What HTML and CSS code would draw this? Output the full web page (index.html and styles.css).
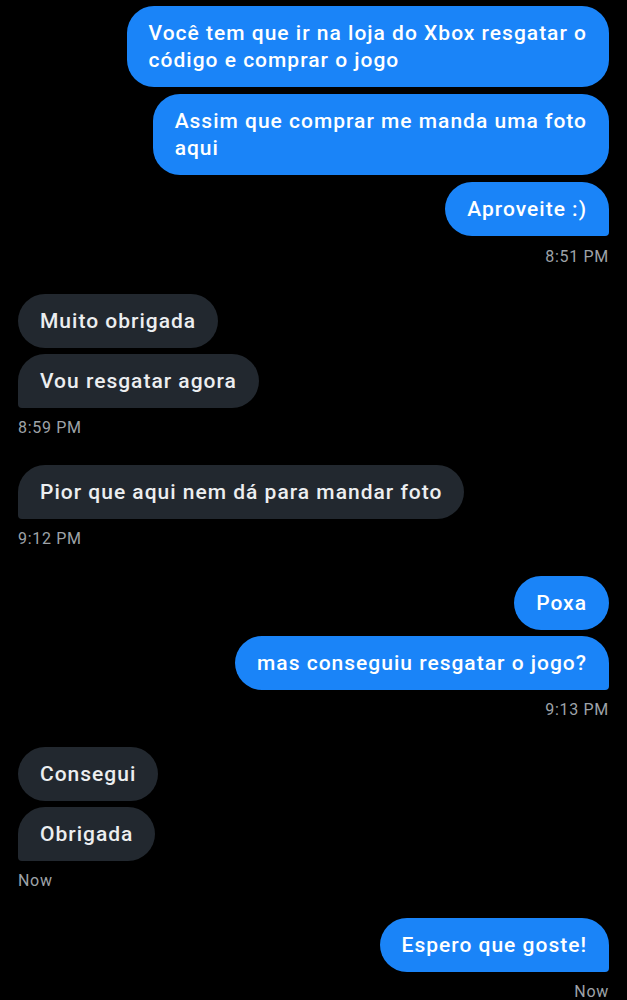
FILE: index.html
```html
<!DOCTYPE html>
<html lang="pt">
<head>
  <meta charset="UTF-8">
  <title>Conversa</title>
  <link rel="stylesheet" href="styles.css">
</head>
<body>

<div class="chat">

  <div class="group sent first">
    <div class="bubble">Você tem que ir na loja do Xbox resgatar o<br>código e comprar o jogo</div>
    <div class="bubble">Assim que comprar me manda uma foto<br>aqui</div>
    <div class="bubble">Aproveite :)</div>
    <div class="time">8:51 PM</div>
  </div>

  <div class="group received">
    <div class="bubble">Muito obrigada</div>
    <div class="bubble">Vou resgatar agora</div>
    <div class="time">8:59 PM</div>
  </div>

  <div class="group received">
    <div class="bubble">Pior que aqui nem dá para mandar foto</div>
    <div class="time">9:12 PM</div>
  </div>

  <div class="group sent">
    <div class="bubble">Poxa</div>
    <div class="bubble">mas conseguiu resgatar o jogo?</div>
    <div class="time">9:13 PM</div>
  </div>

  <div class="group received">
    <div class="bubble">Consegui</div>
    <div class="bubble">Obrigada</div>
    <div class="time">Now</div>
  </div>

  <div class="group sent">
    <div class="bubble">Espero que goste!</div>
    <div class="time">Now</div>
  </div>

</div>

</body>
</html>
```

FILE: styles.css
```css
body {
  margin: 0;
  background-color: #000;
  font-family: Roboto, "Noto Sans", sans-serif;
}
.chat {
  display: flex;
  flex-direction: column;
  gap: 27px;
  padding: 6px 18px 0 18px;
}
.group {
  display: flex;
  flex-direction: column;
  gap: 6px;
}
.first {
  gap: 7px;
}
.sent {
  align-items: flex-end;
}
.received {
  align-items: flex-start;
}
.bubble {
  padding: 13.5px 22px;
  font-size: 21px;
  font-weight: 500;
  letter-spacing: 1px;
  line-height: 27px;
  border-radius: 27px;
  white-space: nowrap;
}
.sent .bubble {
  background-color: #1a84f8;
  color: #fff;
}
.received .bubble {
  background-color: #22282f;
  color: #eceef0;
}
.sent .bubble:nth-last-child(2) {
  border-bottom-right-radius: 4px;
}
.received .bubble:nth-last-child(2) {
  border-bottom-left-radius: 4px;
}
.time {
  margin-top: 4px;
  font-size: 16px;
  letter-spacing: 0.7px;
  line-height: 20px;
  color: #9ea3a8;
}
```
